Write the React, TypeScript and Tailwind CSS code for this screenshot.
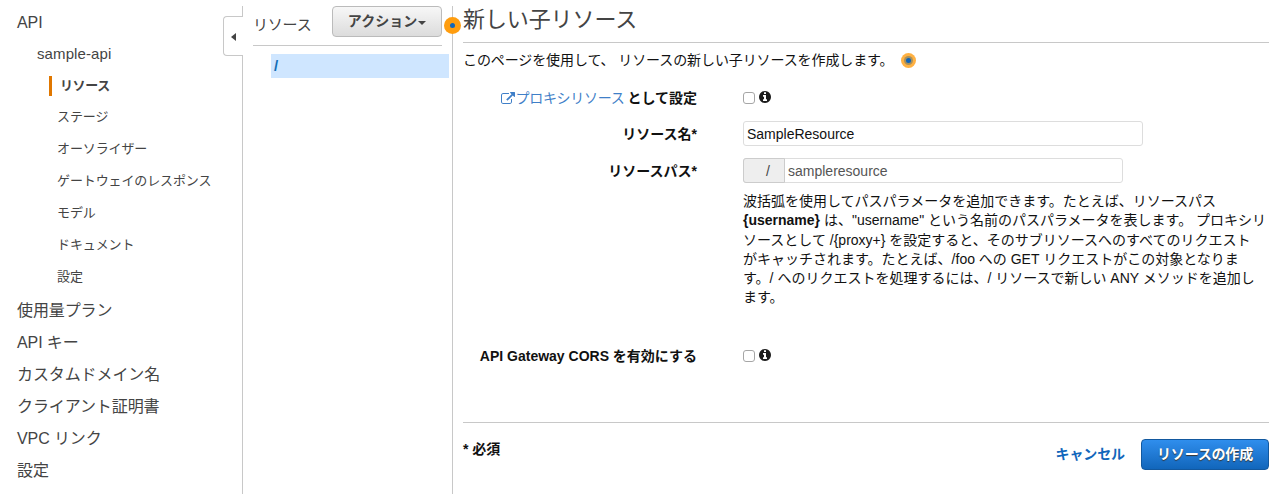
import React from 'react';

type NavItem = { label: string; level: 0 | 1 | 2; active?: boolean };

const navItems: NavItem[] = [
  { label: 'API', level: 0 },
  { label: 'sample-api', level: 1 },
  { label: 'リソース', level: 2, active: true },
  { label: 'ステージ', level: 2 },
  { label: 'オーソライザー', level: 2 },
  { label: 'ゲートウェイのレスポンス', level: 2 },
  { label: 'モデル', level: 2 },
  { label: 'ドキュメント', level: 2 },
  { label: '設定', level: 2 },
  { label: '使用量プラン', level: 0 },
  { label: 'API キー', level: 0 },
  { label: 'カスタムドメイン名', level: 0 },
  { label: 'クライアント証明書', level: 0 },
  { label: 'VPC リンク', level: 0 },
  { label: '設定', level: 0 },
];

const levelClass = {
  0: 'pl-[17px] pt-px text-[16px] tracking-[-0.1px]',
  1: 'pl-[37px] text-[15px] tracking-[0.1px]',
  2: 'pl-[57px] pb-[2px] text-[13px] tracking-[-0.12px]',
};

function InfoIcon() {
  return (
    <svg viewBox="128 128 1536 1536" className="mb-[2px] ml-1 size-3 shrink-0" fill="#1c1c1c">
      <path d="M1152 1376v-160q0-14-9-23t-23-9h-96v-512q0-14-9-23t-23-9h-320q-14 0-23 9t-9 23v160q0 14 9 23t23 9h96v320h-96q-14 0-23 9t-9 23v160q0 14 9 23t23 9h448q14 0 23-9t9-23zm-128-896v-160q0-14-9-23t-23-9h-192q-14 0-23 9t-9 23v160q0 14 9 23t23 9h192q14 0 23-9t9-23zm640 416q0 209-103 385.5t-279.5 279.5-385.5 103-385.5-103-279.5-279.5-103-385.5 103-385.5 279.5-279.5 385.5-103 385.5 103 279.5 279.5 103 385.5z" />
    </svg>
  );
}

function ExternalLinkIcon() {
  return (
    <svg viewBox="0 0 1792 1664" className="h-[13px] w-[14px] shrink-0" fill="#3f7fc8">
      <path d="M1408 928v320q0 119-84.5 203.5t-203.5 84.5h-832q-119 0-203.5-84.5t-84.5-203.5v-832q0-119 84.5-203.5t203.5-84.5h704q14 0 23 9t9 23v64q0 14-9 23t-23 9h-704q-66 0-113 47t-47 113v832q0 66 47 113t113 47h832q66 0 113-47t47-113v-320q0-14 9-23t23-9h64q14 0 23 9t9 23zm384-864v512q0 26-19 45t-45 19-45-19l-176-176-652 652q-10 10-23 10t-23-10l-114-114q-10-10-10-23t10-23l652-652-176-176q-19-19-19-45t19-45 45-19h512q26 0 45 19t19 45z" />
    </svg>
  );
}

function CheckWithInfo() {
  return (
    <div className="flex items-center">
      <input type="checkbox" className="size-3 appearance-none rounded-[3px] border border-[#a6a6a6] bg-white" />
      <InfoIcon />
    </div>
  );
}

function Row({ label, className, children }: { label: React.ReactNode; className: string; children: React.ReactNode }) {
  return (
    <div className={`flex items-center ${className}`}>
      <div className="mr-[46px] flex w-[234px] items-center justify-end pt-px font-bold whitespace-nowrap">{label}</div>
      {children}
    </div>
  );
}

export default function App() {
  return (
    <div className="flex h-[494px] w-[1285px] overflow-hidden bg-white pt-[6px] font-['Liberation_Sans','Noto_Sans_CJK_JP',sans-serif] text-[14px] text-[#111]">
      <nav className="w-[223px] shrink-0 text-[#444]">
        {navItems.map((item, i) => (
          <div key={i} className={`flex h-8 items-center whitespace-nowrap ${levelClass[item.level]}`}>
            {item.active ? (
              <span className="mt-[2px] -ml-2 h-5 border-l-[3px] border-[#e07700] pl-2 leading-5 font-bold tracking-[-0.4px]">{item.label}</span>
            ) : (
              item.label
            )}
          </div>
        ))}
      </nav>

      <div className="flex w-5 shrink-0 flex-col">
        <div className="h-[10px] border-r border-[#c8c8c8]" />
        <div className="flex h-10 items-center rounded-l-[4px] border border-r-0 border-[#c8c8c8] pt-[2px] pl-[7px]">
          <svg viewBox="0 0 5 8" className="h-2 w-[5px]" fill="#444">
            <path d="M5 0v8L0 4z" />
          </svg>
        </div>
        <div className="flex-1 border-r border-[#c8c8c8]" />
      </div>

      <section className="relative w-[210px] shrink-0 border-r border-[#c8c8c8]">
        <div className="ml-[10px] flex h-10 w-[189px] items-start justify-between border-b border-[#c8c8c8] text-[#444]">
          <h2 className="mt-[7px] text-[15px] leading-6 tracking-[-0.2px]">リソース</h2>
          <button className="flex h-[31px] w-[110px] items-center justify-center gap-px rounded-[4px] border border-[#bbb] bg-linear-to-b from-[#f7f7f7] to-[#dcdcdc] text-[14px] font-bold">
            アクション
            <svg viewBox="0 0 8 4" className="mt-[2px] h-1 w-2" fill="#444">
              <path d="M0 0h8L4 4z" />
            </svg>
          </button>
        </div>
        <div className="mt-2 mr-[3px] ml-7 h-6 bg-[#cfe6ff] pl-[3px] text-[15px] leading-6 font-bold text-[#146eb4]">/</div>
        <span className="absolute top-[11px] -right-[9px] flex size-[17px] items-center justify-center rounded-full bg-[#ff9d0f]">
          <span className="size-[5px] rounded-full bg-[#1166bb]" />
        </span>
      </section>

      <main className="ml-[10px] flex w-[806px] flex-col">
        <h1 className="h-[37px] border-b border-[#c8c8c8] text-[22px] leading-[28px] tracking-[-0.1px] text-[#444]">新しい子リソース</h1>
        <p className="mt-[6px] flex h-[23px] items-center whitespace-pre">
          <span className="pb-px tracking-[-0.1px]">このページを使用して、 リソースの新しい子リソースを作成します。</span>
          <span className="ml-[7px] flex size-[15px] items-center justify-center rounded-full bg-[#ffb142]">
            <span className="flex size-[9px] items-center justify-center rounded-full bg-[#a8905c]">
              <span className="size-[5px] rounded-full bg-[#0d63bb]" />
            </span>
          </span>
        </p>

        <Row
          className="mt-4 h-[20px]"
          label={
            <>
              <ExternalLinkIcon />
              <span className="mr-[3px] ml-px font-normal tracking-[-0.3px] text-[#3f7fc8]">プロキシリソース</span>として設定
            </>
          }
        >
          <CheckWithInfo />
        </Row>

        <Row className="mt-[13px] h-[25px]" label="リソース名*">
          <input
            defaultValue="SampleResource"
            className="h-[25px] w-[400px] rounded-[3px] border border-[#ddd] px-[3px] text-[14px] text-[#111]"
          />
        </Row>

        <Row className="mt-3 h-[25px]" label="リソースパス*">
          <div className="flex h-[25px] w-[380px] rounded-[3px] border border-[#ddd]">
            <span className="-my-px -ml-px w-[42px] rounded-l-[3px] border border-[#ccc] bg-[#eee] pl-[22px] leading-[24px] text-[#444]">/</span>
            <input defaultValue="sampleresource" className="min-w-0 flex-1 px-[3px] pt-px text-[14px] text-[#555]" />
          </div>
        </Row>

        <div className="mt-[9px] ml-[280px] h-[116px] leading-[19.3px] whitespace-nowrap">
          <div>波括弧を使用してパスパラメータを追加できます。たとえば、リソースパス</div>
          <div><b>{'{username}'}</b> は、"username" という名前のパスパラメータを表します。 プロキシリ</div>
          <div>ソースとして /{'{proxy+}'} を設定すると、そのサブリソースへのすべてのリクエスト</div>
          <div>がキャッチされます。たとえば、/foo への GET リクエストがこの対象となりま</div>
          <div>す。/ へのリクエストを処理するには、/ リソースで新しい ANY メソッドを追加し</div>
          <div>ます。</div>
        </div>

        <Row className="mt-[38px] h-5" label="API Gateway CORS を有効にする">
          <CheckWithInfo />
        </Row>

        <footer className="mt-[56px] flex h-[72px] justify-between border-t border-[#c8c8c8]">
          <span className="mt-4 leading-5 font-bold">* 必須</span>
          <div className="mt-4 flex h-[31px] items-center">
            <a className="mr-4 font-bold tracking-[-0.1px] text-[#1166bb]">キャンセル</a>
            <button className="h-[31px] w-32 rounded-[4px] border border-[#12589f] bg-linear-to-b from-[#2f8eed] to-[#1166bb] text-[14px] font-bold tracking-[-0.2px] text-white [text-shadow:0_1px_1px_#333]">
              リソースの作成
            </button>
          </div>
        </footer>
      </main>
    </div>
  );
}
